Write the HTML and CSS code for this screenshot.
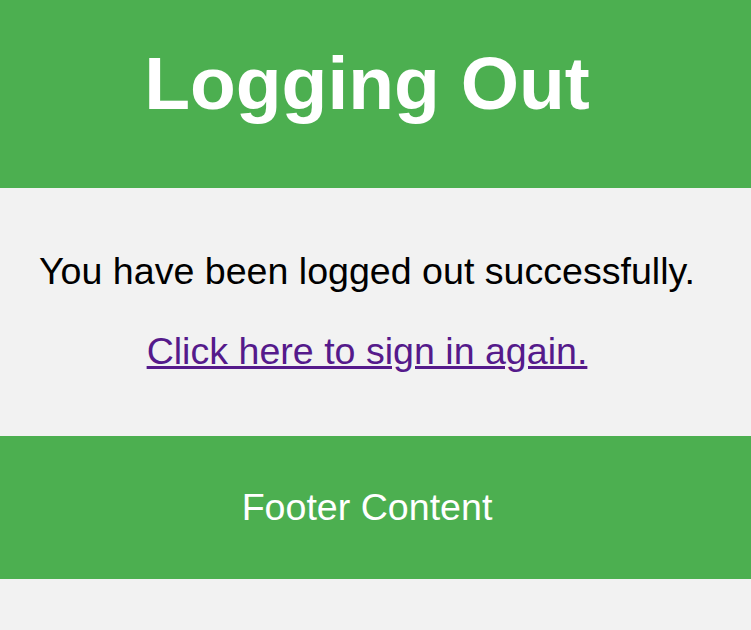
FILE: index.html
```html
<!DOCTYPE html>
<html lang="en">
<head>
<meta charset="utf-8">
<title>Logging Out</title>
<link rel="stylesheet" href="styles.css">
</head>
<body>
<header class="site-header">
  <h1 class="title">Logging Out</h1>
</header>
<main class="content">
  <p class="message">You have been logged out successfully.</p>
  <p class="message"><a class="signin-link" href="#">Click here to sign in again.</a></p>
</main>
<footer class="site-footer">
  <p class="footer-text">Footer Content</p>
</footer>
</body>
</html>
```
FILE: styles.css
```css
html, body {
  margin: 0;
  padding: 0;
  background: #f2f2f2;
  font-family: "Liberation Sans", Arial, sans-serif;
}
.site-header {
  background: #4caf50;
  color: #ffffff;
  text-align: center;
  padding: 40px 17px 0 0;
  height: 148px;
}
.title {
  margin: 0;
  font-size: 75px;
  font-weight: bold;
  line-height: normal;
}
.content {
  text-align: center;
  padding: 24px 17px 25px 0;
}
.message {
  font-size: 37.6px;
  margin: 37.6px 0;
  color: #000000;
}
.signin-link {
  color: #551a8b;
  text-decoration: underline;
}
.site-footer {
  background: #4caf50;
  color: #ffffff;
  text-align: center;
  padding: 50px 17px 50px 0;
}
.footer-text {
  margin: 0;
  font-size: 37.6px;
}
```
